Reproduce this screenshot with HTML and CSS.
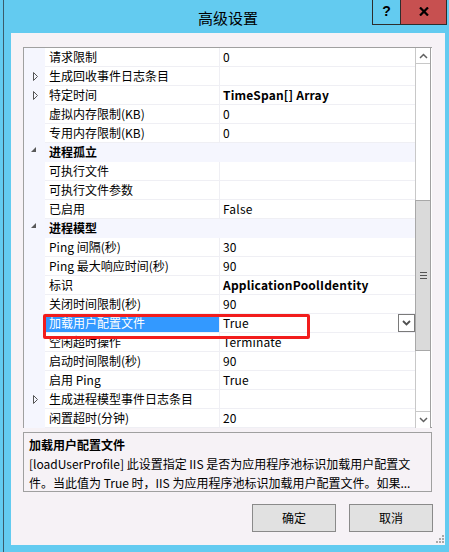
FILE: index.html
```html
<!DOCTYPE html>
<html lang="zh-CN">
<head>
<meta charset="utf-8">
<title>高级设置</title>
<link rel="stylesheet" href="styles.css">
</head>
<body>
<div class="window">
  <div class="titlebar">
    <div class="title">高级设置</div>
    <div class="caption">
      <div class="cap-help">?</div>
      <div class="cap-close">
        <svg width="10" height="9" viewBox="0 0 10 9"><path d="M1 0.5 L9 8.5 M9 0.5 L1 8.5" stroke="#000" stroke-width="2.2" fill="none"/></svg>
      </div>
    </div>
  </div>
  <div class="client">
    <div class="grid">
      <div class="rows">
        <div class="row"><div class="mg"></div><div class="name">请求限制</div><div class="val">0</div></div>
        <div class="row"><div class="mg"><svg class="exp" width="6" height="9" viewBox="0 0 6 9"><polygon points="0.5,0.5 4.5,4.5 0.5,8.5" fill="none" stroke="#555"/></svg></div><div class="name">生成回收事件日志条目</div><div class="val"></div></div>
        <div class="row"><div class="mg"><svg class="exp" width="6" height="9" viewBox="0 0 6 9"><polygon points="0.5,0.5 4.5,4.5 0.5,8.5" fill="none" stroke="#555"/></svg></div><div class="name">特定时间</div><div class="val b">TimeSpan[] Array</div></div>
        <div class="row"><div class="mg"></div><div class="name">虚拟内存限制(KB)</div><div class="val">0</div></div>
        <div class="row"><div class="mg"></div><div class="name">专用内存限制(KB)</div><div class="val">0</div></div>
        <div class="row cat"><div class="mg"><svg class="col" width="6" height="6" viewBox="0 0 6 6"><polygon points="5,0 5,5 0,5" fill="#595959"/></svg></div><div class="catname">进程孤立</div></div>
        <div class="row"><div class="mg"></div><div class="name">可执行文件</div><div class="val"></div></div>
        <div class="row"><div class="mg"></div><div class="name">可执行文件参数</div><div class="val"></div></div>
        <div class="row"><div class="mg"></div><div class="name">已启用</div><div class="val">False</div></div>
        <div class="row cat"><div class="mg"><svg class="col" width="6" height="6" viewBox="0 0 6 6"><polygon points="5,0 5,5 0,5" fill="#595959"/></svg></div><div class="catname">进程模型</div></div>
        <div class="row"><div class="mg"></div><div class="name">Ping 间隔(秒)</div><div class="val">30</div></div>
        <div class="row"><div class="mg"></div><div class="name">Ping 最大响应时间(秒)</div><div class="val">90</div></div>
        <div class="row"><div class="mg"></div><div class="name">标识</div><div class="val b">ApplicationPoolIdentity</div></div>
        <div class="row"><div class="mg"></div><div class="name">关闭时间限制(秒)</div><div class="val">90</div></div>
        <div class="row sel"><div class="mg"></div><div class="name">加载用户配置文件</div><div class="val"><span>True</span><span class="dd"><svg width="9" height="6" viewBox="0 0 9 6"><path d="M1 1 L4.5 4.5 L8 1" fill="none" stroke="#505050" stroke-width="1.8"/></svg></span></div></div>
        <div class="row"><div class="mg"></div><div class="name">空闲超时操作</div><div class="val">Terminate</div></div>
        <div class="row"><div class="mg"></div><div class="name">启动时间限制(秒)</div><div class="val">90</div></div>
        <div class="row"><div class="mg"></div><div class="name">启用 Ping</div><div class="val">True</div></div>
        <div class="row"><div class="mg"><svg class="exp" width="6" height="9" viewBox="0 0 6 9"><polygon points="0.5,0.5 4.5,4.5 0.5,8.5" fill="none" stroke="#555"/></svg></div><div class="name">生成进程模型事件日志条目</div><div class="val"></div></div>
        <div class="row"><div class="mg"></div><div class="name">闲置超时(分钟)</div><div class="val">20</div></div>
        <div class="highlight"></div>
      </div>
      <div class="scrollbar">
        <div class="sb-btn sb-up"><svg width="9" height="6" viewBox="0 0 9 6"><path d="M1 5 L4.5 1.5 L8 5" fill="none" stroke="#606060" stroke-width="1.5"/></svg></div>
        <div class="sb-track1"></div>
        <div class="sb-thumb"><svg width="7" height="7" viewBox="0 0 7 7"><path d="M0 0.5 H7 M0 3.5 H7 M0 6.5 H7" stroke="#555" stroke-width="1"/></svg></div>
        <div class="sb-track2"></div>
        <div class="sb-btn sb-down"><svg width="9" height="6" viewBox="0 0 9 6"><path d="M1 1 L4.5 4.5 L8 1" fill="none" stroke="#606060" stroke-width="1.5"/></svg></div>
      </div>
    </div>
    <div class="desc">
      <div class="desc-title">加载用户配置文件</div>
      <div class="desc-text">[loadUserProfile] 此设置指定 IIS 是否为应用程序池标识加载用户配置文<br>件。当此值为 True 时，IIS 为应用程序池标识加载用户配置文件。如果...</div>
    </div>
    <div class="buttons">
      <div class="btn">确定</div>
      <div class="btn">取消</div>
    </div>
    <svg class="grip" width="8" height="8" viewBox="0 0 8 8"><g fill="#A8A8A8"><rect x="6" y="0" width="2" height="2"/><rect x="3" y="3" width="2" height="2"/><rect x="6" y="3" width="2" height="2"/><rect x="0" y="6" width="2" height="2"/><rect x="3" y="6" width="2" height="2"/><rect x="6" y="6" width="2" height="2"/></g></svg>
  </div>
</div>
</body>
</html>
```
FILE: styles.css
```css
html, body {
  margin: 0;
  padding: 0;
}
body {
  width: 449px;
  height: 552px;
  overflow: hidden;
  background: #63CBF0;
  font-family: "Noto Sans CJK SC", "Noto Sans", sans-serif;
  font-size: 12px;
  color: #000;
}
.window {
  position: relative;
  margin-left: 3px;
  height: 552px;
  border-left: 1px solid #3b5c6b;
  display: flex;
  flex-direction: column;
}
.titlebar {
  position: relative;
  height: 33px;
  flex: none;
}
.title {
  padding-top: 8px;
  padding-left: 3px;
  text-align: center;
  font-size: 15px;
  line-height: 20px;
}
.caption {
  position: absolute;
  top: 0;
  left: 368px;
  display: flex;
}
.cap-help {
  box-sizing: border-box;
  width: 28px;
  height: 25px;
  border-left: 1px solid #2d2d2d;
  border-bottom: 1px solid #2d2d2d;
  font-weight: 700;
  font-size: 14px;
  line-height: 22px;
  text-align: center;
  font-family: "Liberation Sans", sans-serif;
}
.cap-close {
  box-sizing: border-box;
  width: 47px;
  height: 25px;
  background: #C75050;
  border: 1px solid #2d2d2d;
  border-top: none;
  display: flex;
  align-items: center;
  justify-content: center;
  padding-bottom: 2px;
}
.client {
  position: relative;
  margin-left: 7px;
  width: 434px;
  height: 512px;
  box-sizing: border-box;
  background: #F6F2F6;
  padding: 14px 12px 0 12px;
}
.grid {
  width: 409px;
  height: 381px;
  box-sizing: border-box;
  border: 1px solid #A0A0A0;
  border-right: none;
  display: flex;
  background: #fff;
}
.rows {
  position: relative;
  width: 391px;
  height: 380px;
  overflow: hidden;
}
.row {
  display: flex;
  height: 19px;
  line-height: 18px;
}
.mg {
  width: 21px;
  flex: none;
  background: #F5F6FE;
  display: flex;
  align-items: center;
  padding-left: 9px;
  box-sizing: border-box;
}
.name {
  width: 175px;
  flex: none;
  box-sizing: border-box;
  padding-left: 4px;
  border-bottom: 1px solid #EFEFF4;
  border-right: 1px solid #EFEFF4;
  white-space: nowrap;
}
.val {
  flex: 1;
  box-sizing: border-box;
  padding-left: 3px;
  border-bottom: 1px solid #EFEFF4;
  white-space: nowrap;
  display: flex;
  justify-content: space-between;
  align-items: flex-start;
  letter-spacing: 0.2px;
}
.b {
  font-weight: 700;
}
.cat .catname {
  flex: 1;
  background: #F5F6FE;
  padding-left: 4px;
  font-weight: 700;
}
.cat .mg {
  padding-left: 7px;
  align-items: flex-start;
  padding-top: 4px;
}
.sel .name {
  background: #3399FF;
  color: #fff;
}
.dd {
  box-sizing: border-box;
  width: 17px;
  height: 18px;
  border: 1px solid #7A7A7A;
  background: #fff;
  display: flex;
  align-items: center;
  justify-content: center;
}
.highlight {
  position: absolute;
  left: 19px;
  top: 266px;
  width: 267px;
  height: 25px;
  box-sizing: border-box;
  border: 3px solid #F21D1D;
  border-radius: 2px;
}
.scrollbar {
  width: 16px;
  height: 380px;
  box-sizing: border-box;
  border-left: 1px solid #C8C8C8;
  border-right: 1px solid #A0A0A0;
  display: flex;
  flex-direction: column;
  background: #fff;
}
.sb-btn {
  display: flex;
  align-items: center;
  justify-content: center;
  box-sizing: border-box;
}
.sb-up {
  height: 16px;
  border-bottom: 1px solid #C8C8C8;
}
.sb-track1 {
  height: 136px;
}
.sb-thumb {
  height: 151px;
  box-sizing: border-box;
  margin-left: -1px;
  background: #DADADA;
  border: 1px solid #A8A8A8;
  border-right: none;
  display: flex;
  align-items: center;
  justify-content: center;
}
.sb-track2 {
  flex: 1;
}
.sb-down {
  height: 17px;
  border-top: 1px solid #C8C8C8;
}
.desc {
  margin-top: 4px;
  width: 409px;
  height: 60px;
  box-sizing: border-box;
  border: 1px solid #A0A0A0;
  padding: 2px 0 0 5px;
  line-height: 19px;
  white-space: nowrap;
  overflow: hidden;
}
.desc-title {
  font-weight: 700;
}
.buttons {
  margin-top: 12px;
  display: flex;
  justify-content: flex-end;
  gap: 13px;
}
.btn {
  box-sizing: border-box;
  width: 84px;
  height: 28px;
  background: #E1E1E1;
  border: 1px solid #8A8A8A;
  text-align: center;
  line-height: 25px;
}
.grip {
  position: absolute;
  right: 1px;
  bottom: 2px;
}
```
